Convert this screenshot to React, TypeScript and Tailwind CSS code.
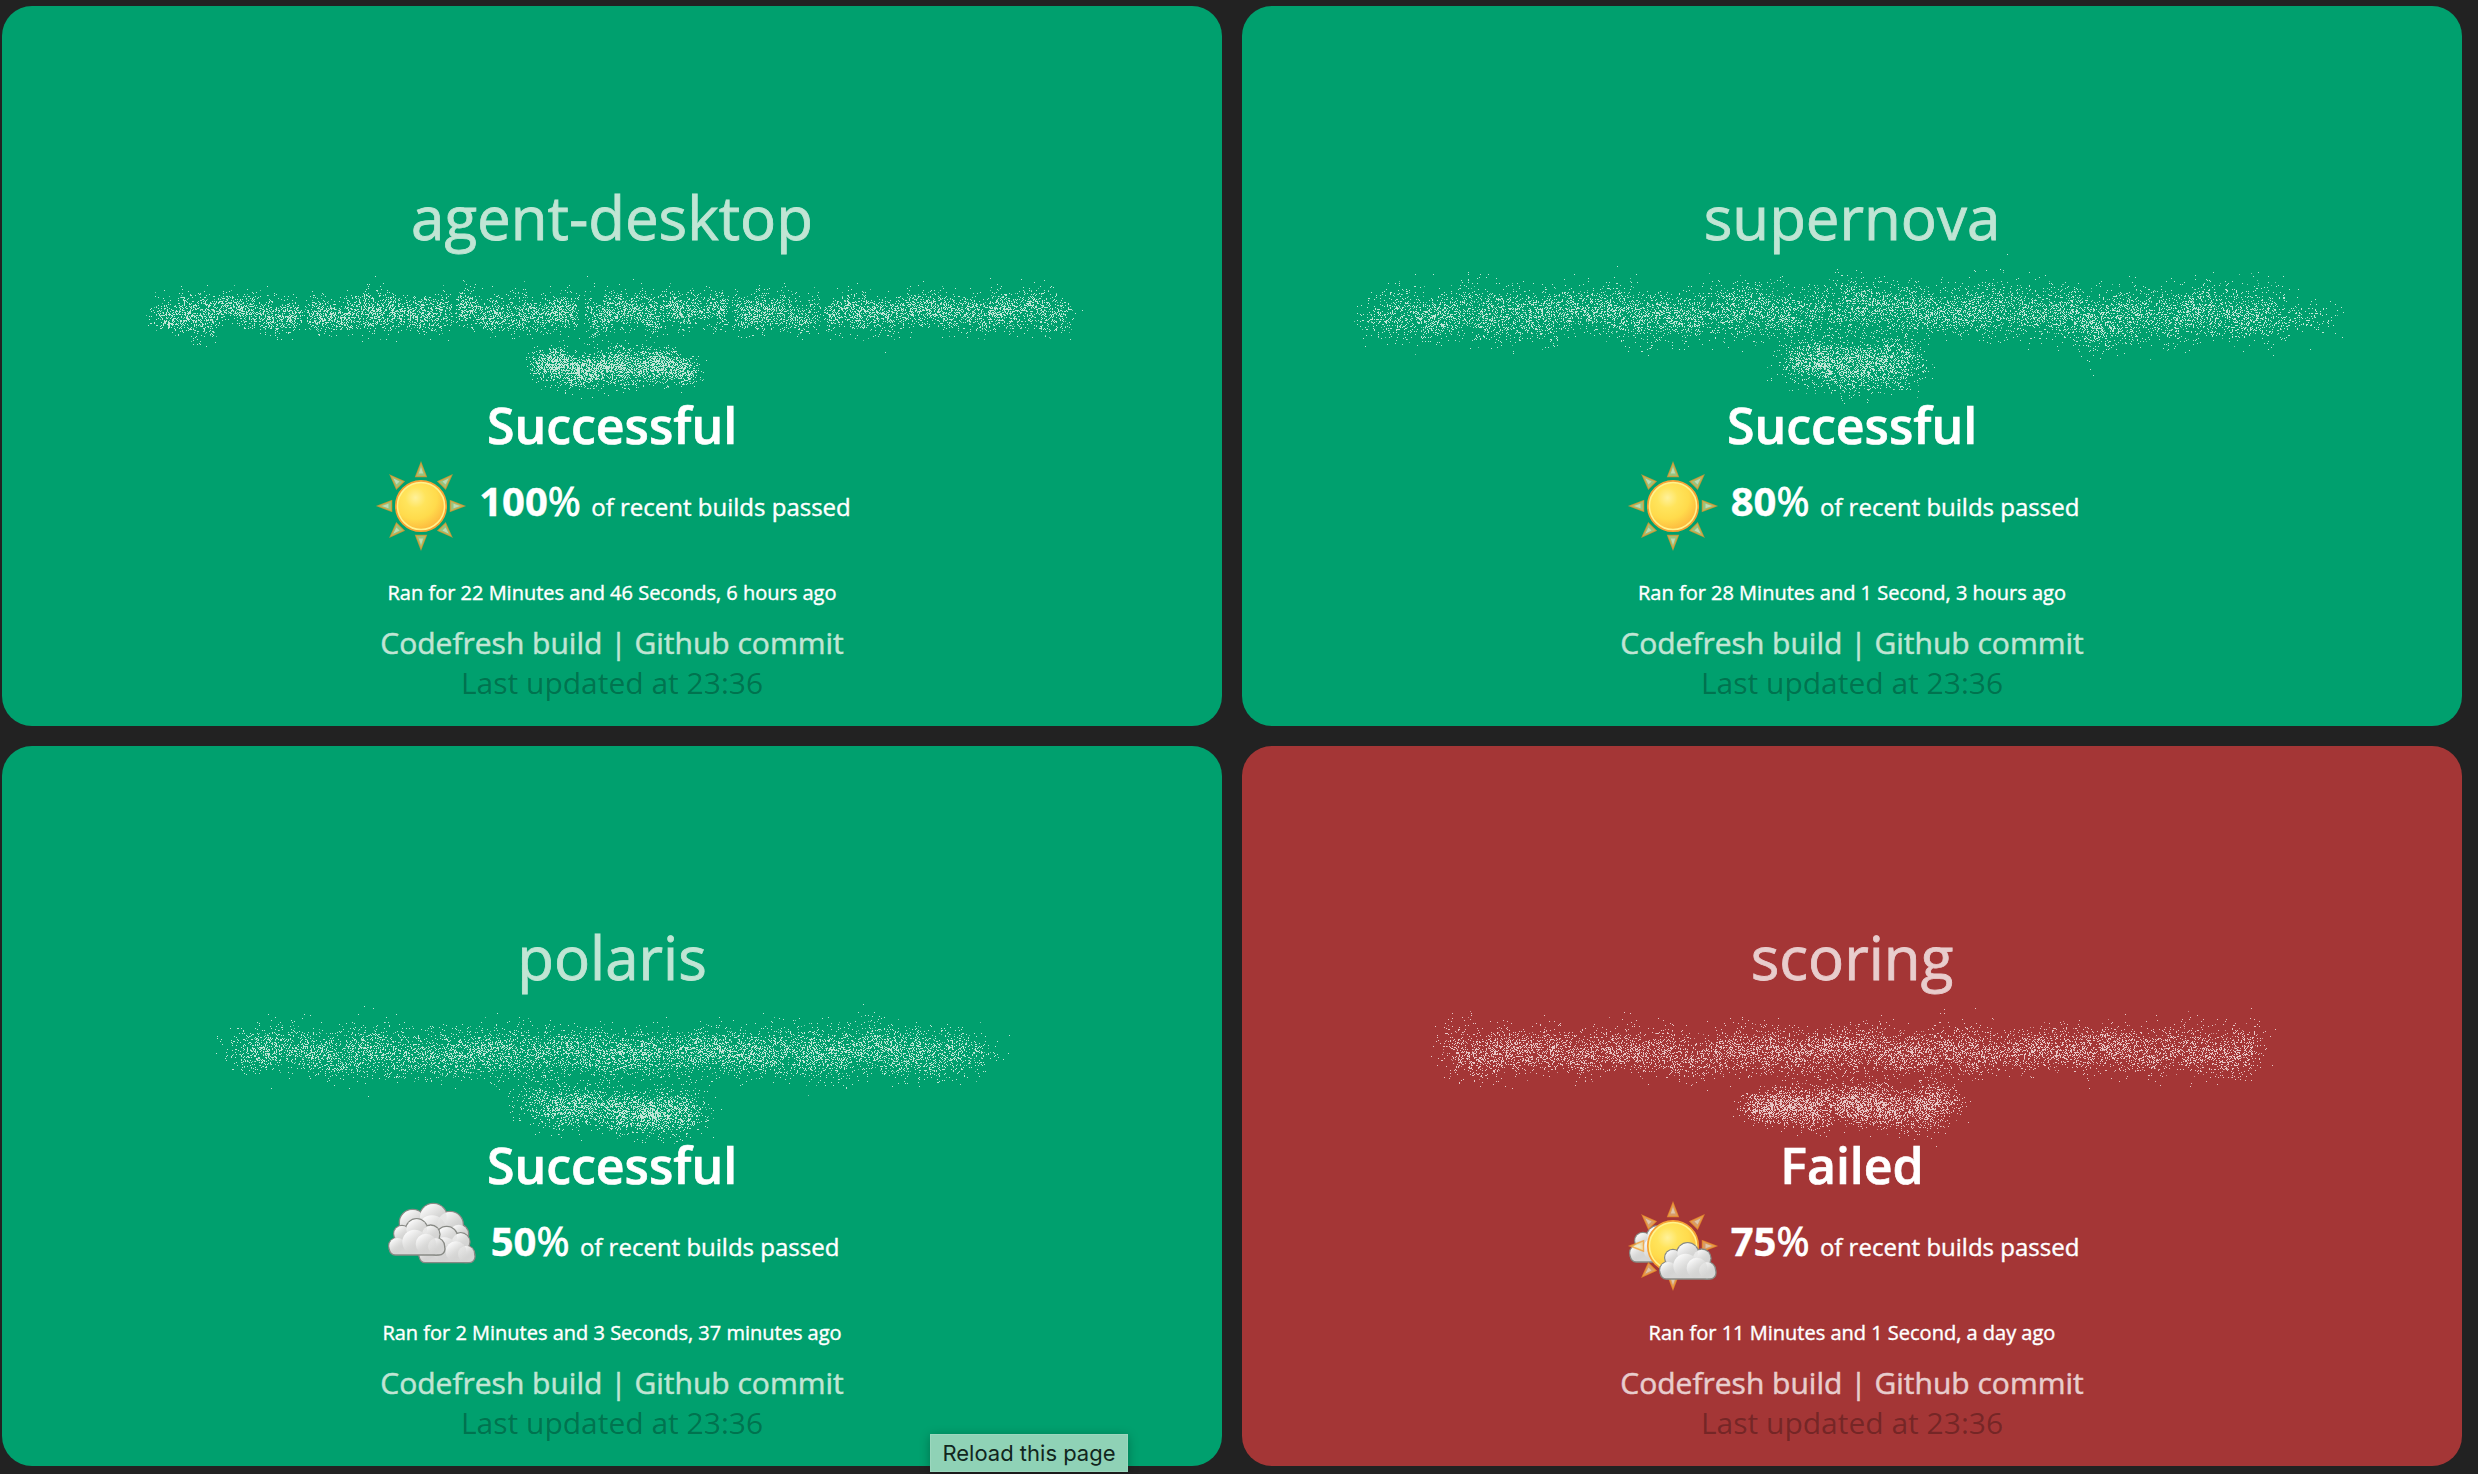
import { useMemo } from "react";

type Weather = "sun" | "clouds" | "partly";

interface Band {
  from: number;
  to: number;
  y: number;
  spread: number;
  soft: number;
  density: number;
  step: number;
  gaps?: number[];
  dips?: number[];
}

interface Build {
  name: string;
  status: string;
  score: string;
  weather: Weather;
  ran: string;
  failed?: boolean;
  seed: number;
  bands: Band[];
}

const builds: Build[] = [
  {
    name: "agent-desktop",
    status: "Successful",
    score: "100",
    weather: "sun",
    ran: "Ran for 22 Minutes and 46 Seconds, 6 hours ago",
    seed: 11,
    bands: [
      { from: 158, to: 1066, y: 306, spread: 10, soft: 4, density: 11.2, step: 23, gaps: [301, 452, 579, 728, 820], dips: [202, 588] },
      { from: 536, to: 688, y: 360, spread: 9, soft: 5, density: 20, step: 20 },
    ],
  },
  {
    name: "supernova",
    status: "Successful",
    score: "80",
    weather: "sun",
    ran: "Ran for 28 Minutes and 1 Second, 3 hours ago",
    seed: 23,
    bands: [
      { from: 130, to: 1042, y: 306, spread: 13.5, soft: 10, density: 11.4, step: 32, dips: [302, 855] },
      { from: 1048, to: 1092, y: 310, spread: 9, soft: 8, density: 2.4, step: 20 },
      { from: 552, to: 668, y: 360, spread: 13, soft: 10, density: 20, step: 30 },
    ],
  },
  {
    name: "polaris",
    status: "Successful",
    score: "50",
    weather: "clouds",
    ran: "Ran for 2 Minutes and 3 Seconds, 37 minutes ago",
    seed: 37,
    bands: [
      { from: 244, to: 976, y: 306, spread: 13, soft: 11, density: 12.2, step: 32 },
      { from: 530, to: 692, y: 360, spread: 11.5, soft: 9, density: 18, step: 30 },
    ],
  },
  {
    name: "scoring",
    status: "Failed",
    score: "75",
    weather: "partly",
    ran: "Ran for 11 Minutes and 1 Second, a day ago",
    failed: true,
    seed: 53,
    bands: [
      { from: 212, to: 1012, y: 305, spread: 12, soft: 8, density: 12, step: 30 },
      { from: 512, to: 708, y: 360, spread: 10.5, soft: 8, density: 18, step: 28 },
    ],
  },
];

function random(seed: number) {
  let s = seed * 2654435761;
  return () => {
    s = (s + 0x6d2b79f5) | 0;
    let t = Math.imul(s ^ (s >>> 15), 1 | s);
    t = (t + Math.imul(t ^ (t >>> 7), 61 | t)) ^ t;
    return ((t ^ (t >>> 14)) >>> 0) / 4294967296;
  };
}

// Scatters single-pixel specks in soft clusters along each band.
function specks(bands: Band[], seed: number) {
  const rnd = random(seed);
  const normal = () => (rnd() + rnd() + rnd() + rnd() + rnd() + rnd() - 3) * 1.41;
  let bright = "";
  let dim = "";
  for (const b of bands) {
    for (let cx = b.from; cx < b.to; cx += b.step) {
      const width = Math.min(b.step, b.to - cx);
      for (let k = 0; k < 3; k++) {
        const count = Math.round((width * b.density * (0.6 + rnd() * 0.8)) / 3);
        const bx = cx + ((k + rnd()) / 3) * width;
        const by = b.y + (rnd() - 0.5) * b.spread * 1.5;
        const tall = b.spread * (0.65 + rnd() * 0.4);
        for (let i = 0; i < count; i++) {
          const x = Math.round(bx + normal() * (b.soft + width * 0.12));
          if (b.gaps?.some((g) => rnd() > Math.abs(x - g) / 7)) continue;
          let y = by + normal() * tall;
          if (b.dips?.some((d) => Math.abs(x - d) < 14) && rnd() < 0.35) y += 13;
          const dot = `M${x} ${Math.round(y)}h1v1h-1z`;
          if (rnd() < 0.85) bright += dot;
          else dim += dot;
        }
      }
    }
  }
  return { bright, dim };
}

function Scramble({ build }: { build: Build }) {
  const { bright, dim } = useMemo(() => specks(build.bands, build.seed), [build]);
  return (
    <svg
      className={`block h-[153px] w-[1220px] shrink-0 overflow-visible ${build.failed ? "text-[#e8c6c6]" : "text-[#c2e6d6]"}`}
      viewBox="0 241 1220 153"
      shapeRendering="crispEdges"
      fill="currentColor"
    >
      <path d={bright} />
      <path d={dim} opacity={0.65} />
    </svg>
  );
}

const lobes: [number, number, number][] = [
  [96, 131, 23],
  [182, 133, 26],
  [140, 119, 31],
  [82, 168, 24],
  [198, 169, 24],
  [134, 152, 37],
  [168, 163, 31],
];

function CloudShape() {
  return (
    <>
      {lobes.slice(0, 5).map(([x, y, r]) => (
        <circle key={`${x}-${y}`} cx={x} cy={y} r={r} />
      ))}
      <rect x="60" y="160" width="163" height="33" rx="16" />
      <rect x="88" y="130" width="108" height="50" />
    </>
  );
}

function Cloud({ dx = 0, dy = 0 }: { dx?: number; dy?: number }) {
  return (
    <g transform={`translate(${dx} ${dy})`}>
      <g fill="#888a85" stroke="#888a85" strokeWidth="8">
        <CloudShape />
      </g>
      <g fill="#d6d6d5">
        <CloudShape />
      </g>
      {lobes.slice(0, 5).map(([x, y, r]) => (
        <circle key={`${x}-${y}`} cx={x} cy={y} r={r} fill="url(#lobe)" />
      ))}
      <circle cx="134" cy="156" r="37" fill="url(#lobe)" />
      <circle cx="168" cy="162" r="31" fill="url(#lobe)" />
    </g>
  );
}

function BackCloud() {
  const parts: [number, number, number][] = [
    [128, 98, 38],
    [240, 104, 38],
    [266, 132, 28],
    [190, 82, 40],
    [186, 118, 42],
  ];
  return (
    <g>
      <g fill="#888a85" stroke="#888a85" strokeWidth="8">
        {parts.map(([x, y, r]) => (
          <circle key={x} cx={x} cy={y} r={r} />
        ))}
      </g>
      <g fill="#d0d0cf">
        {parts.map(([x, y, r]) => (
          <circle key={x} cx={x} cy={y} r={r} />
        ))}
      </g>
      {parts.map(([x, y, r]) => (
        <circle key={x} cx={x} cy={y} r={r} fill="url(#lobe)" />
      ))}
    </g>
  );
}

function Rays() {
  return (
    <g>
      {[0, 45, 90, 135, 180, 225, 270, 315].map((a) => (
        <g key={a} transform={`rotate(${a} 48 48)`}>
          <path d="M48 5 L53.2 18.5 H42.8 Z" fill="#fcdf8a" fillOpacity="0.6" stroke="#f39a2c" strokeOpacity="0.72" strokeWidth="1.5" />
          <path d="M48 9 L50.2 15.5 H45.8 Z" fill="#e6f2ee" fillOpacity="0.5" />
        </g>
      ))}
    </g>
  );
}

function Disc() {
  return (
    <g>
      <circle cx="48" cy="48" r="25.2" fill="#fff38c" stroke="#f7a233" strokeWidth="1.7" />
      <circle cx="48" cy="48" r="22.8" fill="url(#sun-face)" />
    </g>
  );
}

function WeatherIcon({ kind }: { kind: Weather }) {
  return (
    <svg className="block size-24 shrink-0" viewBox="0 0 96 96">
      <defs>
        <radialGradient id="sun-face" cx="0.38" cy="0.32" r="0.75">
          <stop offset="0" stopColor="#fff19a" />
          <stop offset="0.3" stopColor="#ffe45c" />
          <stop offset="0.62" stopColor="#ffdb4c" />
          <stop offset="1" stopColor="#fdb53c" />
        </radialGradient>
        <linearGradient id="lobe" x1="0.2" y1="0.1" x2="0.75" y2="0.85">
          <stop offset="0" stopColor="#fafafa" />
          <stop offset="0.5" stopColor="#dededd" stopOpacity="0.8" />
          <stop offset="1" stopColor="#c8c8c6" stopOpacity="0" />
        </linearGradient>
      </defs>
      {kind === "sun" && (
        <>
          <Rays />
          <Disc />
        </>
      )}
      {kind === "partly" && (
        <>
          <g transform="translate(-14 -8) scale(0.33333)">
            <Cloud dy={21} />
          </g>
          <Rays />
          <Disc />
          <g transform="translate(-14 -8) scale(0.33333)">
            <Cloud dx={90} dy={72} />
          </g>
        </>
      )}
      {kind === "clouds" && (
        <g transform="translate(-15 -8) scale(0.33333)">
          <BackCloud />
          <Cloud dx={90} dy={23} />
          <Cloud />
        </g>
      )}
    </svg>
  );
}

function Card({ build }: { build: Build }) {
  return (
    <section
      className={`flex h-[720px] w-[1220px] flex-col items-center whitespace-nowrap rounded-[30px] pt-[181px] text-white ${build.failed ? "bg-[#a43636]" : "bg-[#00a06e]"}`}
    >
      <h1
        className={`text-[60px] leading-[60px] [-webkit-text-stroke:0.8px_currentColor] ${build.failed ? "text-[#e8cdcd]" : "text-[#c0e5d4]"}`}
      >
        {build.name}
      </h1>
      <Scramble build={build} />
      <h2 className="text-[50px] font-semibold leading-[50px] [-webkit-text-stroke:0.7px_white]">{build.status}</h2>
      <div className="mt-2 flex h-24 items-start gap-[10px]">
        <WeatherIcon kind={build.weather} />
        <p className="mt-[23px] text-[40px] leading-10">
          <span className="font-bold [-webkit-text-stroke:0.4px_white]">{build.score}</span>
          <span className="[-webkit-text-stroke:0.9px_white]">%</span>{" "}
          <span className="text-2xl leading-10 [-webkit-text-stroke:0.4px_white]">of recent builds passed</span>
        </p>
      </div>
      <p className="mt-[29px] text-xl leading-5 [-webkit-text-stroke:0.4px_white]">{build.ran}</p>
      <p
        className={`mt-[25px] text-3xl leading-[30px] [-webkit-text-stroke:0.5px_currentColor] ${build.failed ? "text-[#e8cdcd]" : "text-[#c0e5d4]"}`}
      >
        <a>Codefresh build</a> | <a>Github commit</a>
      </p>
      <p className="mt-[10px] text-3xl leading-[30px] text-black/30">Last updated at 23:36</p>
    </section>
  );
}

export default function App() {
  return (
    <main className="relative h-[1474px] w-[2478px] overflow-hidden bg-[#222222] pl-[2px] pt-[6px] font-['Open_Sans',sans-serif]">
      <div className="grid grid-cols-[1220px_1220px] gap-5">
        {builds.map((b) => (
          <Card key={b.name} build={b} />
        ))}
      </div>
      <div className="absolute left-[930px] top-[1434px] flex h-[38px] w-[198px] items-center justify-center bg-[#8fd2b6] font-['Inter',sans-serif] text-[22px] leading-none text-[#11261d] shadow-[0_2px_10px_rgba(0,0,0,0.28),inset_0_0_0_1px_rgba(255,255,255,0.12)]">
        Reload this page
      </div>
    </main>
  );
}
